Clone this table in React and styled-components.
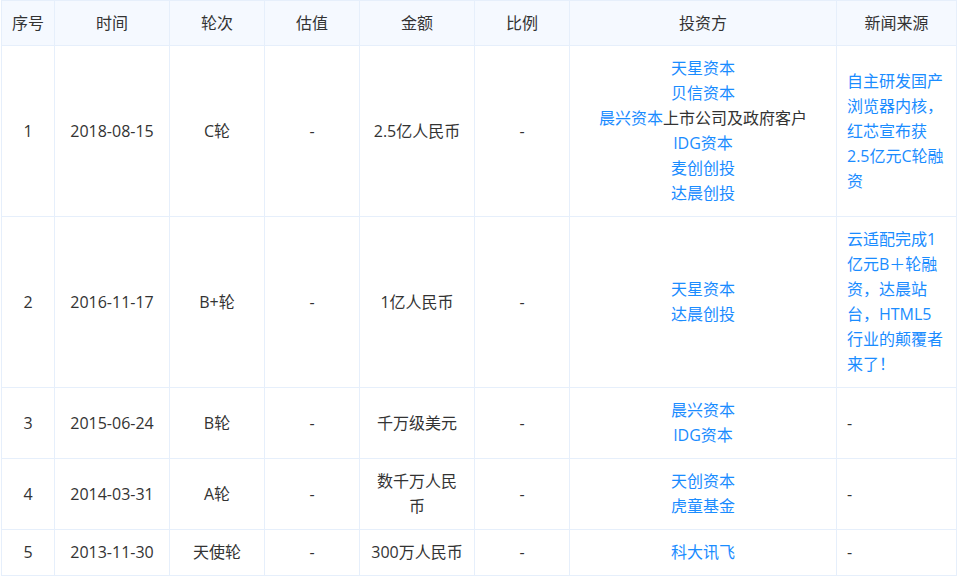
import React from "react";
import styled, { createGlobalStyle } from "styled-components";

const GlobalStyle = createGlobalStyle`
  html, body {
    margin: 0;
    padding: 0;
    background: #ffffff;
  }
  body {
    font-family: "Open Sans", "Noto Sans CJK SC", sans-serif;
  }
`;

const Page = styled.div`
  padding: 0 0 0 1px;
`;

const Table = styled.table`
  width: 955px;
  border-collapse: collapse;
  table-layout: fixed;
  font-size: 16px;
  line-height: 25px;
  color: #333333;
`;

const HeadCell = styled.th`
  height: 44px;
  padding: 0 10px;
  background: #f5f9ff;
  border: 1px solid #e6effb;
  font-weight: normal;
  text-align: center;
  color: #333333;
`;

const Cell = styled.td`
  padding: 10px;
  border: 1px solid #e6effb;
  text-align: ${(p) => (p.$left ? "left" : "center")};
  vertical-align: middle;
`;

const Link = styled.a`
  color: #1a8cff;
  text-decoration: none;
  cursor: pointer;
`;

const Investor = styled.div`
  white-space: nowrap;
`;

const columns = [
  { title: "序号", width: 53 },
  { title: "时间", width: 115 },
  { title: "轮次", width: 95 },
  { title: "估值", width: 95 },
  { title: "金额", width: 115 },
  { title: "比例", width: 95 },
  { title: "投资方", width: 267 },
  { title: "新闻来源", width: 120 },
];

const rows = [
  {
    no: 1,
    date: "2018-08-15",
    round: "C轮",
    amount: "2.5亿人民币",
    investors: [
      { name: "天星资本" },
      { name: "贝信资本" },
      { name: "晨兴资本", note: "上市公司及政府客户" },
      { name: "IDG资本" },
      { name: "麦创创投" },
      { name: "达晨创投" },
    ],
    news: "自主研发国产浏览器内核，红芯宣布获2.5亿元C轮融资",
  },
  {
    no: 2,
    date: "2016-11-17",
    round: "B+轮",
    amount: "1亿人民币",
    investors: [{ name: "天星资本" }, { name: "达晨创投" }],
    news: "云适配完成1亿元B＋轮融资，达晨站台，HTML5行业的颠覆者来了！",
  },
  {
    no: 3,
    date: "2015-06-24",
    round: "B轮",
    amount: "千万级美元",
    investors: [{ name: "晨兴资本" }, { name: "IDG资本" }],
  },
  {
    no: 4,
    date: "2014-03-31",
    round: "A轮",
    amount: "数千万人民币",
    investors: [{ name: "天创资本" }, { name: "虎童基金" }],
  },
  {
    no: 5,
    date: "2013-11-30",
    round: "天使轮",
    amount: "300万人民币",
    investors: [{ name: "科大讯飞" }],
  },
];

export default function App() {
  return (
    <Page>
      <GlobalStyle />
      <Table>
        <colgroup>
          {columns.map((c) => (
            <col key={c.title} style={{ width: c.width }} />
          ))}
        </colgroup>
        <thead>
          <tr>
            {columns.map((c) => (
              <HeadCell key={c.title}>{c.title}</HeadCell>
            ))}
          </tr>
        </thead>
        <tbody>
          {rows.map((r) => (
            <tr key={r.no}>
              <Cell>{r.no}</Cell>
              <Cell>{r.date}</Cell>
              <Cell>{r.round}</Cell>
              <Cell>-</Cell>
              <Cell>{r.amount}</Cell>
              <Cell>-</Cell>
              <Cell>
                {r.investors.map((inv) => (
                  <Investor key={inv.name}>
                    <Link>{inv.name}</Link>
                    {inv.note}
                  </Investor>
                ))}
              </Cell>
              <Cell $left>{r.news ? <Link>{r.news}</Link> : "-"}</Cell>
            </tr>
          ))}
        </tbody>
      </Table>
    </Page>
  );
}
